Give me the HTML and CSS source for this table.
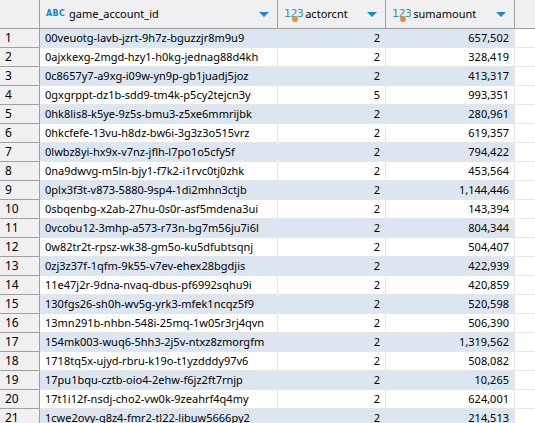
FILE: index.html
```html
<!DOCTYPE html>
<html>
<head>
<meta charset="utf-8">
<link rel="stylesheet" href="styles.css">
</head>
<body>
<div class="grid">
  <div class="row head">
    <div class="cell num"></div>
    <div class="cell c1"><span class="ico-abc">ABC</span><span class="htext">game_account_id</span><span class="tri"></span></div>
    <div class="cell c2"><span class="ico-123">123<i class="dot"></i></span><span class="htext">actorcnt</span><span class="tri"></span></div>
    <div class="cell c3"><span class="ico-123">123<i class="dot"></i></span><span class="htext">sumamount</span><span class="tri"></span></div>
    <div class="cell fill"></div>
  </div>
  <div class="row odd"><div class="cell num">1</div><div class="cell c1">00veuotg-lavb-jzrt-9h7z-bguzzjr8m9u9</div><div class="cell c2">2</div><div class="cell c3">657,502</div><div class="cell fill"></div></div>
  <div class="row"><div class="cell num">2</div><div class="cell c1">0ajxkexg-2mgd-hzy1-h0kg-jednag88d4kh</div><div class="cell c2">2</div><div class="cell c3">328,419</div><div class="cell fill"></div></div>
  <div class="row odd"><div class="cell num">3</div><div class="cell c1">0c8657y7-a9xg-i09w-yn9p-gb1juadj5joz</div><div class="cell c2">2</div><div class="cell c3">413,317</div><div class="cell fill"></div></div>
  <div class="row"><div class="cell num">4</div><div class="cell c1">0gxgrppt-dz1b-sdd9-tm4k-p5cy2tejcn3y</div><div class="cell c2">5</div><div class="cell c3">993,351</div><div class="cell fill"></div></div>
  <div class="row odd"><div class="cell num">5</div><div class="cell c1">0hk8lis8-k5ye-9z5s-bmu3-z5xe6mmrijbk</div><div class="cell c2">2</div><div class="cell c3">280,961</div><div class="cell fill"></div></div>
  <div class="row"><div class="cell num">6</div><div class="cell c1">0hkcfefe-13vu-h8dz-bw6i-3g3z3o515vrz</div><div class="cell c2">2</div><div class="cell c3">619,357</div><div class="cell fill"></div></div>
  <div class="row odd"><div class="cell num">7</div><div class="cell c1">0lwbz8yi-hx9x-v7nz-jflh-l7po1o5cfy5f</div><div class="cell c2">2</div><div class="cell c3">794,422</div><div class="cell fill"></div></div>
  <div class="row"><div class="cell num">8</div><div class="cell c1">0na9dwvg-m5ln-bjy1-f7k2-i1rvc0tj0zhk</div><div class="cell c2">2</div><div class="cell c3">453,564</div><div class="cell fill"></div></div>
  <div class="row odd"><div class="cell num">9</div><div class="cell c1">0plx3f3t-v873-5880-9sp4-1di2mhn3ctjb</div><div class="cell c2">2</div><div class="cell c3">1,144,446</div><div class="cell fill"></div></div>
  <div class="row"><div class="cell num">10</div><div class="cell c1">0sbqenbg-x2ab-27hu-0s0r-asf5mdena3ui</div><div class="cell c2">2</div><div class="cell c3">143,394</div><div class="cell fill"></div></div>
  <div class="row odd"><div class="cell num">11</div><div class="cell c1">0vcobu12-3mhp-a573-r73n-bg7m56ju7i6l</div><div class="cell c2">2</div><div class="cell c3">804,344</div><div class="cell fill"></div></div>
  <div class="row"><div class="cell num">12</div><div class="cell c1">0w82tr2t-rpsz-wk38-gm5o-ku5dfubtsqnj</div><div class="cell c2">2</div><div class="cell c3">504,407</div><div class="cell fill"></div></div>
  <div class="row odd"><div class="cell num">13</div><div class="cell c1">0zj3z37f-1qfm-9k55-v7ev-ehex28bgdjis</div><div class="cell c2">2</div><div class="cell c3">422,939</div><div class="cell fill"></div></div>
  <div class="row"><div class="cell num">14</div><div class="cell c1">11e47j2r-9dna-nvaq-dbus-pf6992sqhu9i</div><div class="cell c2">2</div><div class="cell c3">420,859</div><div class="cell fill"></div></div>
  <div class="row odd"><div class="cell num">15</div><div class="cell c1">130fgs26-sh0h-wv5g-yrk3-mfek1ncqz5f9</div><div class="cell c2">2</div><div class="cell c3">520,598</div><div class="cell fill"></div></div>
  <div class="row"><div class="cell num">16</div><div class="cell c1">13mn291b-nhbn-548i-25mq-1w05r3rj4qvn</div><div class="cell c2">2</div><div class="cell c3">506,390</div><div class="cell fill"></div></div>
  <div class="row odd"><div class="cell num">17</div><div class="cell c1">154mk003-wuq6-5hh3-2j5v-ntxz8zmorgfm</div><div class="cell c2">2</div><div class="cell c3">1,319,562</div><div class="cell fill"></div></div>
  <div class="row"><div class="cell num">18</div><div class="cell c1">1718tq5x-ujyd-rbru-k19o-t1yzdddy97v6</div><div class="cell c2">2</div><div class="cell c3">508,082</div><div class="cell fill"></div></div>
  <div class="row odd"><div class="cell num">19</div><div class="cell c1">17pu1bqu-cztb-oio4-2ehw-f6jz2ft7rnjp</div><div class="cell c2">2</div><div class="cell c3">10,265</div><div class="cell fill"></div></div>
  <div class="row"><div class="cell num">20</div><div class="cell c1">17t1i12f-nsdj-cho2-vw0k-9zeahrf4q4my</div><div class="cell c2">2</div><div class="cell c3">624,001</div><div class="cell fill"></div></div>
  <div class="row odd"><div class="cell num">21</div><div class="cell c1">1cwe2ovy-g8z4-fmr2-tl22-libuw5666py2</div><div class="cell c2">2</div><div class="cell c3">214,513</div><div class="cell fill"></div></div>
</div>
</body>
</html>
```

FILE: styles.css
```css
html, body {
  margin: 0;
  padding: 0;
  background: #ffffff;
}
body {
  width: 535px;
  height: 423px;
  overflow: hidden;
  font-family: "Noto Sans", "Open Sans", sans-serif;
  font-size: 11px;
  color: #000000;
}
.grid {
  display: flex;
  flex-direction: column;
}
.row {
  display: grid;
  grid-template-columns: 40px 238px 108px 129px 1fr;
  height: 19px;
}
.cell {
  box-sizing: border-box;
  border-right: 1px solid #e6e6e6;
  border-bottom: 1px solid #e6e6e6;
  display: flex;
  align-items: center;
  padding: 0 5px;
  white-space: nowrap;
  overflow: hidden;
  line-height: 18px;
}
.row.odd .cell {
  background: #dce6f1;
}
.row .cell.fill {
  background: #ffffff;
  border-right: none;
}
.row.odd .cell.fill {
  background: #ffffff;
}
.cell.num {
  background: #f0f0f0;
  border-right: 1px solid #a0a0a0;
  border-bottom: 1px solid #a0a0a0;
  padding-left: 5px;
  font-size: 12px;
}
.row.odd .cell.num {
  background: #f0f0f0;
}
.cell.c2, .cell.c3 {
  justify-content: flex-end;
  padding-right: 5px;
}
.row.head {
  height: 29px;
}
.row.head .cell {
  background: #f0f0f0;
  border-right: 1px solid #a0a0a0;
  border-bottom: 1px solid #a0a0a0;
  justify-content: flex-start;
  padding-left: 6px;
  padding-right: 8px;
}
.row.head .cell.fill {
  border-right: none;
}
.htext {
  flex: 1;
  font-size: 11px;
  color: #000;
}
.ico-abc {
  font-family: "DejaVu Sans", sans-serif;
  font-weight: bold;
  font-size: 8px;
  color: #1a86c8;
  margin-right: 4px;
  letter-spacing: 0.3px;
}
.ico-123 {
  position: relative;
  font-family: "DejaVu Sans", sans-serif;
  font-size: 11px;
  color: #2a93d0;
  margin-right: 2px;
  letter-spacing: -0.6px;
}
.ico-123 .dot {
  position: absolute;
  left: 8px;
  top: 11px;
  width: 6px;
  height: 6px;
  border-radius: 50%;
  background: #ef8c3a;
}
.tri {
  width: 0;
  height: 0;
  border-left: 5px solid transparent;
  border-right: 5px solid transparent;
  border-top: 5px solid #1a8ad0;
}
```
